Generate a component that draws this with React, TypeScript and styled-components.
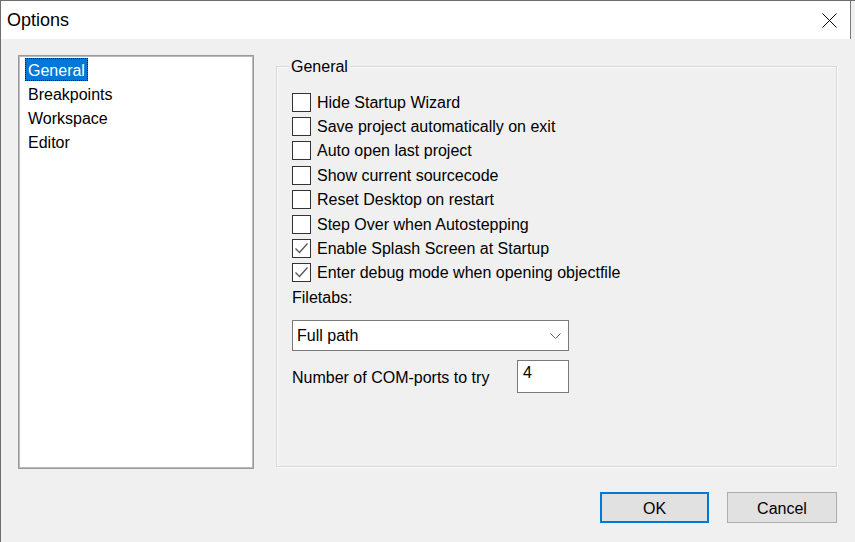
import React from "react";
import styled, { createGlobalStyle } from "styled-components";

const Global = createGlobalStyle`
  html, body { margin: 0; padding: 0; background: #f0f0f0; }
  body { font-family: "Liberation Sans", Arial, sans-serif; }
  * { box-sizing: border-box; }
`;

const Window = styled.div`
  width: 855px;
  height: 542px;
  background: #f0f0f0;
  border-left: 1px solid #6e6e6e;
  border-top: 1px solid #6e6e6e;
  display: flex;
  flex-direction: column;
  font-family: "Liberation Sans", Arial, sans-serif;
  font-size: 16px;
  color: #000;
  overflow: hidden;
`;

const TitleBar = styled.div`
  height: 38px;
  margin-right: 4px;
  background: #fff;
  border-right: 1px solid #777;
  display: flex;
  align-items: center;
  justify-content: space-between;
  padding-left: 6px;
  padding-right: 13px;
`;

const TitleText = styled.span`
  font-size: 18px;
  line-height: 22px;
`;

const CloseIcon = styled.svg`
  width: 15px;
  height: 15px;
  display: block;
`;

const Body = styled.div`
  flex: 1;
  display: flex;
  flex-direction: column;
  padding: 16px 18px 0 17px;
`;

const TopRow = styled.div`
  display: flex;
  align-items: flex-start;
  gap: 22px;
`;

const ListBox = styled.div`
  width: 236px;
  height: 414px;
  background: #fff;
  border: 1px solid #9a9a9a;
  box-shadow: inset 0 0 0 1px #b9b9b9;
  padding: 2px 0 0 6px;
  display: flex;
  flex-direction: column;
`;

const ListItem = styled.div`
  height: 24px;
  display: flex;
  align-items: flex-start;
`;

const ItemLabel = styled.span<{ $selected?: boolean }>`
  display: inline-block;
  height: 23px;
  line-height: 22px;
  padding: 1px 2px 0 2px;
  background: ${(p) => (p.$selected ? "#0078d7" : "transparent")};
  color: ${(p) => (p.$selected ? "#fff" : "#000")};
  border: 1px dotted ${(p) => (p.$selected ? "#1a1a1a" : "transparent")};
`;

const GroupBox = styled.div`
  position: relative;
  flex: 1;
  margin-top: 11px;
  height: 401px;
  border: 1px solid #d9d9d9;
  box-shadow: inset 1px 1px 0 #fbfbfb, 1px 1px 0 #fbfbfb;
  padding: 23px 0 0 15px;
  display: flex;
  flex-direction: column;
`;

const Legend = styled.span`
  position: absolute;
  top: -10px;
  left: 12px;
  line-height: 20px;
  padding: 0 2px;
  background: #f0f0f0;
`;

const CheckRow = styled.label`
  height: 24.4px;
  display: flex;
  align-items: center;
`;

const Box = styled.span`
  width: 19px;
  height: 19px;
  border: 1px solid #333;
  background: #fff;
  display: inline-flex;
  align-items: center;
  justify-content: center;
  flex: none;
`;

const CheckText = styled.span`
  margin-left: 6px;
  line-height: 20px;
  margin-top: 1px;
`;

const FieldLabel = styled.div`
  height: 24px;
  line-height: 24px;
  margin-top: 0.5px;
`;

const Select = styled.div`
  margin-top: 10.5px;
  width: 277px;
  height: 31px;
  background: #fff;
  border: 1px solid #7a7a7a;
  display: flex;
  align-items: center;
  justify-content: space-between;
  padding: 1px 7px 0 4px;
`;

const ComRow = styled.div`
  margin-top: 9px;
  display: flex;
  align-items: center;
`;

const ComLabel = styled.span`
  width: 225px;
  margin-top: 2px;
`;

const NumberInput = styled.div`
  width: 52px;
  height: 33px;
  background: #fff;
  border: 1px solid #7a7a7a;
  padding: 2px 0 0 5px;
  line-height: 20px;
`;

const ButtonRow = styled.div`
  margin-top: 23px;
  display: flex;
  justify-content: flex-end;
  gap: 18px;
`;

const Button = styled.div<{ $default?: boolean }>`
  width: ${(p) => (p.$default ? "109px" : "110px")};
  height: 31px;
  background: #e1e1e1;
  border: ${(p) => (p.$default ? "2px solid #0078d7" : "1px solid #adadad")};
  display: flex;
  align-items: center;
  justify-content: center;
  line-height: 20px;
  padding-top: 2px;
`;

const Check = () => (
  <svg width="15" height="15" viewBox="0 0 15 15">
    <polyline points="1.5,7.5 5.5,11.5 13.5,2.5" fill="none" stroke="#555" strokeWidth="1.3" />
  </svg>
);

const items: { label: string; checked: boolean }[] = [
  { label: "Hide Startup Wizard", checked: false },
  { label: "Save project automatically on exit", checked: false },
  { label: "Auto open last project", checked: false },
  { label: "Show current sourcecode", checked: false },
  { label: "Reset Desktop on restart", checked: false },
  { label: "Step Over when Autostepping", checked: false },
  { label: "Enable Splash Screen at Startup", checked: true },
  { label: "Enter debug mode when opening objectfile", checked: true },
];

const pages = ["General", "Breakpoints", "Workspace", "Editor"];

export default function App() {
  return (
    <>
      <Global />
      <Window>
        <TitleBar>
          <TitleText>Options</TitleText>
          <CloseIcon viewBox="0 0 15 15">
            <line x1="0.5" y1="0.5" x2="14.5" y2="14.5" stroke="#000" strokeWidth="1" />
            <line x1="14.5" y1="0.5" x2="0.5" y2="14.5" stroke="#000" strokeWidth="1" />
          </CloseIcon>
        </TitleBar>
        <Body>
          <TopRow>
            <ListBox>
              {pages.map((p, i) => (
                <ListItem key={p}>
                  <ItemLabel $selected={i === 0}>{p}</ItemLabel>
                </ListItem>
              ))}
            </ListBox>
            <GroupBox>
              <Legend>General</Legend>
              {items.map((it) => (
                <CheckRow key={it.label}>
                  <Box>{it.checked && <Check />}</Box>
                  <CheckText>{it.label}</CheckText>
                </CheckRow>
              ))}
              <FieldLabel>Filetabs:</FieldLabel>
              <Select>
                <span>Full path</span>
                <svg width="11" height="6" viewBox="0 0 11 6">
                  <polyline points="0.5,0.5 5.5,5.5 10.5,0.5" fill="none" stroke="#606060" strokeWidth="1" />
                </svg>
              </Select>
              <ComRow>
                <ComLabel>Number of COM-ports to try</ComLabel>
                <NumberInput>4</NumberInput>
              </ComRow>
            </GroupBox>
          </TopRow>
          <ButtonRow>
            <Button $default>OK</Button>
            <Button>Cancel</Button>
          </ButtonRow>
        </Body>
      </Window>
    </>
  );
}
